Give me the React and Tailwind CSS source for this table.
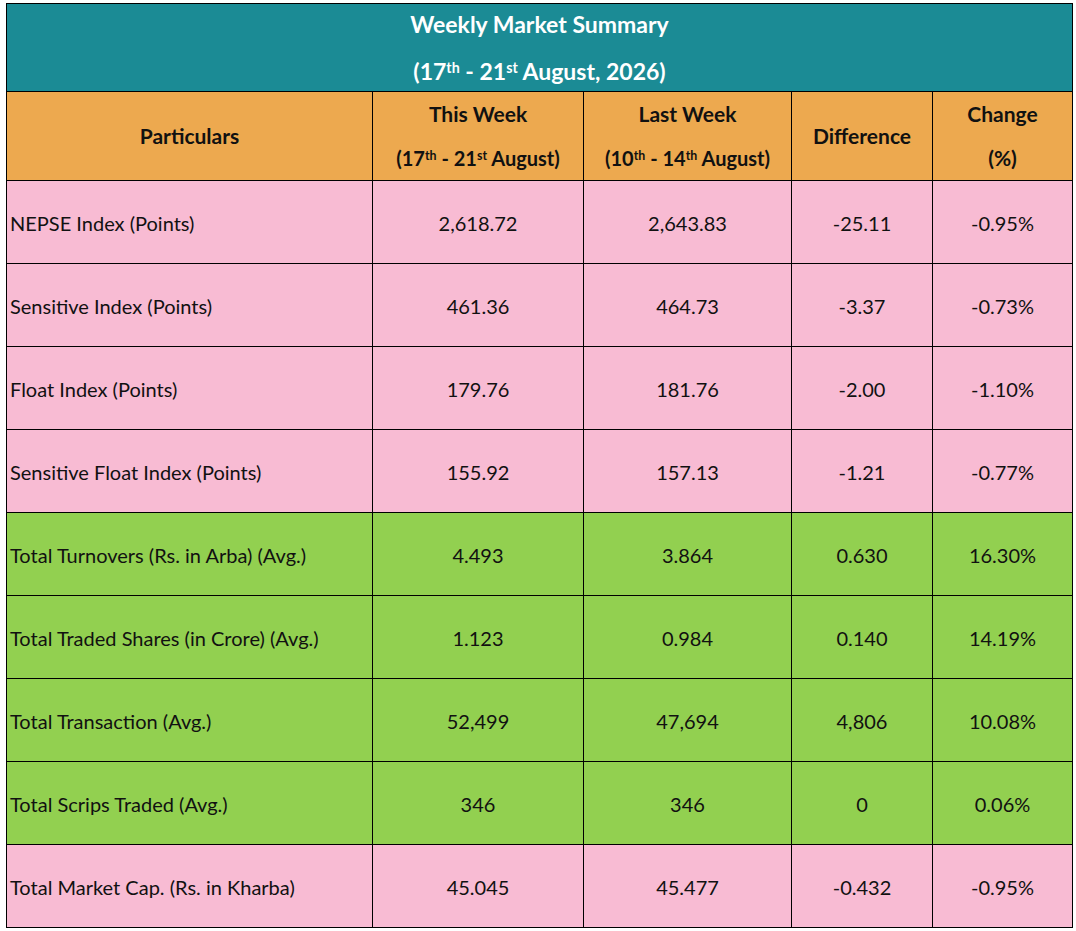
import React from 'react';

const rows = [
    { name: 'NEPSE Index (Points)', thisWeek: '2,618.72', lastWeek: '2,643.83', diff: '-25.11', change: '-0.95%', tone: 'pink' },
    { name: 'Sensitive Index (Points)', thisWeek: '461.36', lastWeek: '464.73', diff: '-3.37', change: '-0.73%', tone: 'pink' },
    { name: 'Float Index (Points)', thisWeek: '179.76', lastWeek: '181.76', diff: '-2.00', change: '-1.10%', tone: 'pink' },
    { name: 'Sensitive Float Index (Points)', thisWeek: '155.92', lastWeek: '157.13', diff: '-1.21', change: '-0.77%', tone: 'pink' },
    { name: 'Total Turnovers (Rs. in Arba) (Avg.)', thisWeek: '4.493', lastWeek: '3.864', diff: '0.630', change: '16.30%', tone: 'green' },
    { name: 'Total Traded Shares (in Crore) (Avg.)', thisWeek: '1.123', lastWeek: '0.984', diff: '0.140', change: '14.19%', tone: 'green' },
    { name: 'Total Transaction (Avg.)', thisWeek: '52,499', lastWeek: '47,694', diff: '4,806', change: '10.08%', tone: 'green' },
    { name: 'Total Scrips Traded (Avg.)', thisWeek: '346', lastWeek: '346', diff: '0', change: '0.06%', tone: 'green' },
    { name: 'Total Market Cap. (Rs. in Kharba)', thisWeek: '45.045', lastWeek: '45.477', diff: '-0.432', change: '-0.95%', tone: 'pink' },
];

const Sup = ({ children }) => <sup className="text-[0.62em]">{children}</sup>;

const App = () => {
    return (
        <div className="min-h-screen bg-white pt-[3px] pl-[6px] text-[20px] text-[#111]" style={{ fontFamily: 'Lato, "Open Sans", sans-serif' }}>
            <table className="table-fixed border-collapse border border-black">
                <colgroup>
                    <col className="w-[366px]" />
                    <col className="w-[211px]" />
                    <col className="w-[208px]" />
                    <col className="w-[141px]" />
                    <col className="w-[140px]" />
                </colgroup>
                <thead>
                    {/* Title */}
                    <tr className="bg-[#1b8b95] h-[88px]">
                        <th colSpan={5} className="border border-black text-white font-bold text-[23px] p-0 align-top">
                            <div className="leading-[40px]">Weekly Market Summary</div>
                            <div className="leading-[40px] mt-[7px]">(17<Sup>th</Sup> - 21<Sup>st</Sup> August, 2026)</div>
                        </th>
                    </tr>
                    {/* Column headers */}
                    <tr className="bg-[#eda94f] h-[85px] text-[21px]">
                        <th className="border border-black font-bold">Particulars</th>
                        <th className="border border-black font-bold leading-[44px] p-0">
                            <div>This Week</div>
                            <div className="text-[20px]">(17<Sup>th</Sup> - 21<Sup>st</Sup> August)</div>
                        </th>
                        <th className="border border-black font-bold leading-[44px] p-0">
                            <div>Last Week</div>
                            <div className="text-[20px]">(10<Sup>th</Sup> - 14<Sup>th</Sup> August)</div>
                        </th>
                        <th className="border border-black font-bold">Difference</th>
                        <th className="border border-black font-bold leading-[44px]">
                            <div>Change</div>
                            <div>(%)</div>
                        </th>
                    </tr>
                </thead>
                <tbody>
                    {rows.map((r) => (
                        <tr key={r.name} className={r.tone === 'green' ? 'bg-[#92d050] h-[83px]' : 'bg-[#f8bbd3] h-[83px]'}>
                            <td className="border border-black pl-[3px] pt-[1px] whitespace-nowrap">{r.name}</td>
                            <td className="border border-black text-center pt-[1px]">{r.thisWeek}</td>
                            <td className="border border-black text-center pt-[1px]">{r.lastWeek}</td>
                            <td className="border border-black text-center pt-[1px]">{r.diff}</td>
                            <td className="border border-black text-center pt-[1px]">{r.change}</td>
                        </tr>
                    ))}
                </tbody>
            </table>
        </div>
    );
};

export default App;
